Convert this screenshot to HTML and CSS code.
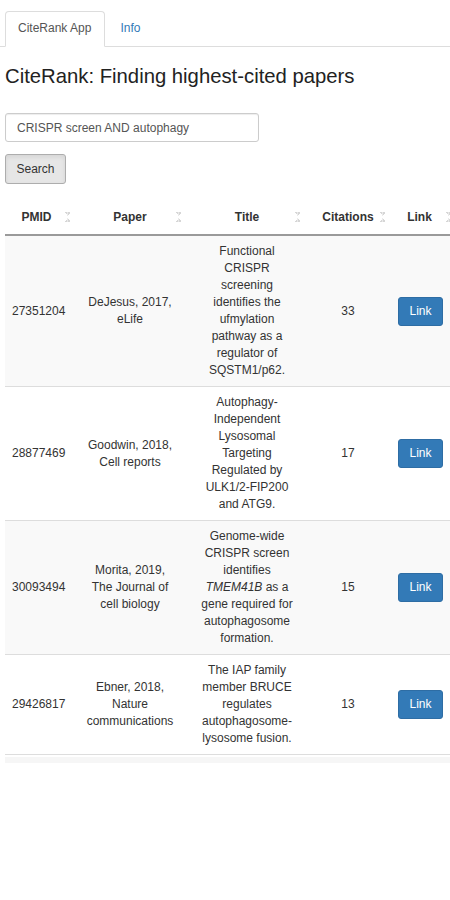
FILE: index.html
```html
<!DOCTYPE html>
<html>
<head>
<meta charset="utf-8">
<link rel="stylesheet" href="styles.css">
</head>
<body>
<div class="page">
  <ul class="tabs">
    <li class="tab active">CiteRank App</li>
    <li class="tab"><a class="tab-link">Info</a></li>
  </ul>
  <h3 class="title">CiteRank: Finding highest-cited papers</h3>
  <input class="query" type="text" value="CRISPR screen AND autophagy">
  <div><button class="btn-search">Search</button></div>
  <table class="results">
    <colgroup>
      <col class="c-pmid"><col class="c-paper"><col class="c-title"><col class="c-cit"><col class="c-link">
    </colgroup>
    <thead>
      <tr>
        <th>PMID<span class="sort"></span></th>
        <th>Paper<span class="sort"></span></th>
        <th>Title<span class="sort"></span></th>
        <th>Citations<span class="sort"></span></th>
        <th>Link<span class="sort"></span></th>
      </tr>
    </thead>
    <tbody>
      <tr class="odd">
        <td>27351204</td>
        <td class="paper">DeJesus, 2017, eLife</td>
        <td class="ttl">Functional CRISPR screening identifies the ufmylation pathway as a regulator of SQSTM1/p62.</td>
        <td>33</td>
        <td><a class="btn-link">Link</a></td>
      </tr>
      <tr>
        <td>28877469</td>
        <td class="paper">Goodwin, 2018, Cell reports</td>
        <td class="ttl">Autophagy-Independent Lysosomal Targeting Regulated by ULK1/2-FIP200 and ATG9.</td>
        <td>17</td>
        <td><a class="btn-link">Link</a></td>
      </tr>
      <tr class="odd">
        <td>30093494</td>
        <td class="paper">Morita, 2019, The Journal of cell biology</td>
        <td class="ttl">Genome-wide CRISPR screen identifies <i>TMEM41B</i> as a gene required for autophagosome formation.</td>
        <td>15</td>
        <td><a class="btn-link">Link</a></td>
      </tr>
      <tr>
        <td>29426817</td>
        <td class="paper">Ebner, 2018, Nature communications</td>
        <td class="ttl">The IAP family member BRUCE regulates autophagosome-lysosome fusion.</td>
        <td>13</td>
        <td><a class="btn-link">Link</a></td>
      </tr>
    </tbody>
  </table>
  <div class="table-foot"></div>
</div>
</body>
</html>
```

FILE: styles.css
```css
html, body {
  margin: 0;
  padding: 0;
  background: #fff;
}
body {
  font-family: "Liberation Sans", Arial, sans-serif;
  font-size: 12px;
  line-height: 17px;
  color: #333;
  width: 450px;
  overflow: hidden;
}
.page {
  padding: 11px 0 0 5px;
}
.tabs {
  list-style: none;
  margin: 0;
  padding: 0;
  display: flex;
  border-bottom: 1px solid #ddd;
  margin-left: -5px;
  padding-left: 5px;
}
.tab {
  margin-right: 2px;
  margin-bottom: -1px;
  padding: 8px 13px 9px 12px;
  border: 1px solid transparent;
  border-radius: 4px 4px 0 0;
  color: #555;
}
.tab.active {
  background: #fff;
  border-color: #ddd #ddd transparent #ddd;
}
.tab-link {
  color: #337ab7;
}
.title {
  margin: 17px 0 0 0;
  font-size: 20.3px;
  line-height: 24px;
  font-weight: 500;
  color: #222;
}
.query {
  display: block;
  box-sizing: border-box;
  margin-top: 25px;
  width: 254px;
  height: 29px;
  padding: 4px 11px;
  font-family: "Liberation Sans", Arial, sans-serif;
  font-size: 12px;
  color: #555;
  border: 1px solid #ccc;
  border-radius: 3px;
  box-shadow: inset 0 1px 1px rgba(0,0,0,.075);
}
.btn-search {
  margin-top: 12px;
  box-sizing: border-box;
  width: 61px;
  height: 30px;
  font-family: "Liberation Sans", Arial, sans-serif;
  font-size: 12px;
  color: #333;
  background: #e6e6e6;
  border: 1px solid #adadad;
  border-radius: 3px;
  box-shadow: inset 0 2px 4px rgba(0,0,0,.08);
  padding: 0;
}
.results {
  margin-top: 17px;
  border-collapse: collapse;
  table-layout: fixed;
  width: 450px;
}
.c-pmid { width: 66px; }
.c-paper { width: 118px; }
.c-title { width: 116px; }
.c-cit { width: 86px; }
.c-link { width: 64px; }
.results th {
  position: relative;
  font-weight: bold;
  text-align: center;
  padding: 8px 7px;
  border-bottom: 2px solid #9a9a9a;
  color: #333;
  white-space: nowrap;
}
.results th:nth-child(1) { padding-right: 10px; }
.results th:nth-child(5) { padding-right: 14px; }
.sort {
  position: absolute;
  right: 5px;
  top: 11px;
  width: 5px;
  height: 10px;
  background:
    linear-gradient(to top right, transparent 50%, #d6d6d6 50%) 0 0 / 2.5px 4px no-repeat,
    linear-gradient(to top left, transparent 50%, #d6d6d6 50%) 2.5px 0 / 2.5px 4px no-repeat,
    linear-gradient(to bottom right, transparent 50%, #d6d6d6 50%) 0 6px / 2.5px 4px no-repeat,
    linear-gradient(to bottom left, transparent 50%, #d6d6d6 50%) 2.5px 6px / 2.5px 4px no-repeat;
}
.results th:nth-child(1) .sort { right: 1px; }
.results th:nth-child(2) .sort { right: 8px; }
.results th:nth-child(3) .sort { right: 5px; }
.results th:nth-child(4) .sort { right: 6px; }
.results th:nth-child(5) .sort { right: 4px; }
.results td {
  text-align: center;
  vertical-align: middle;
  padding: 7px 7px;
  border-bottom: 1px solid #ddd;
}
.results td.paper { padding: 7px 15px; }
.results td.ttl { padding: 7px 9px; }
.results tr.odd td { background: #f9f9f9; }
.btn-link {
  display: inline-block;
  box-sizing: border-box;
  width: 45px;
  height: 29px;
  line-height: 27px;
  color: #fff;
  background: #337ab7;
  border: 1px solid #2e6da4;
  border-radius: 3px;
  margin-left: -5px;
}
.table-foot {
  width: 450px;
  height: 6px;
  margin-top: 2px;
  background: #f6f6f6;
}
```
